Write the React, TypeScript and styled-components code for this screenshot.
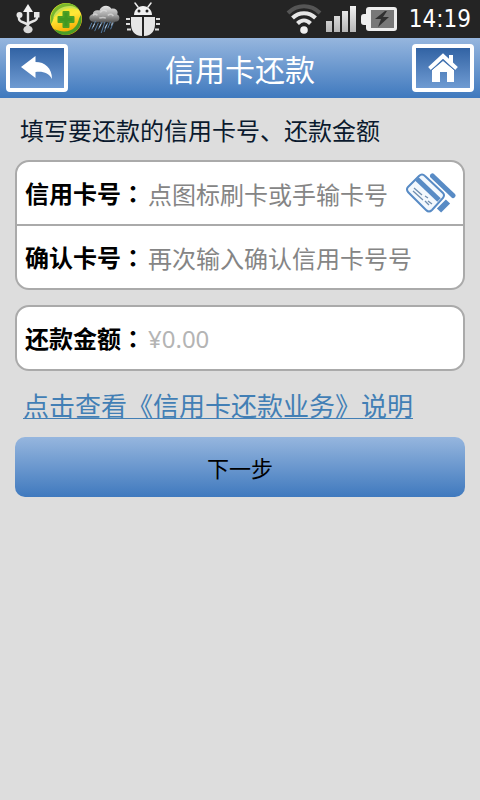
import React from "react";
import styled, { createGlobalStyle } from "styled-components";

const blueGradient = "linear-gradient(#96b6de, #3f79be)";

const GlobalStyle = createGlobalStyle`
  *, *::before, *::after { box-sizing: border-box; }
  html { background: #dddddd; }
  body {
    margin: 0;
    font-family: "Noto Sans CJK SC", sans-serif;
    color: #0b1a2e;
  }
  button, input { font-family: inherit; }
`;

const StatusBar = styled.div`
  display: flex;
  align-items: center;
  justify-content: space-between;
  height: 38px;
  padding: 0 9px 0 16px;
  background: #242424;
`;

const StatusGroup = styled.div<{ $gap: number }>`
  display: flex;
  align-items: center;
  gap: ${(p) => p.$gap}px;
  svg { display: block; }
`;

const Clock = styled.time`
  margin-left: 8px;
  font: 24px/38px "DejaVu Sans Condensed", "DejaVu Sans", sans-serif;
  color: #ffffff;
`;

const Header = styled.header`
  display: flex;
  align-items: center;
  justify-content: space-between;
  height: 60px;
  padding: 0 6px;
  background: ${blueGradient};
`;

const Title = styled.h1`
  margin: 0;
  font-size: 30px;
  line-height: 60px;
  font-weight: 400;
  color: #ffffff;
`;

const HeaderButton = styled.button`
  display: flex;
  align-items: center;
  justify-content: center;
  width: 62px;
  height: 48px;
  padding: 0;
  border: 4px solid #ffffff;
  border-radius: 4px;
  background: linear-gradient(#3263a4, #6f9bd2) padding-box;
  color: #ffffff;
`;

const Form = styled.form`
  display: flex;
  flex-direction: column;
  padding: 16px 15px;
`;

const Intro = styled.p`
  margin: 0 0 14px;
  padding-left: 5px;
  font-size: 24px;
  line-height: 32px;
`;

const Card = styled.div`
  margin-bottom: 15px;
  border: 2px solid #aaaaaa;
  border-radius: 14px;
  background: #ffffff;
`;

const Row = styled.div`
  display: flex;
  align-items: center;
  height: 62px;
  padding: 0 7px 0 8px;
  & + & {
    height: 64px;
    border-top: 2px solid #aaaaaa;
  }
`;

const FieldLabel = styled.label`
  flex: none;
  font-size: 24px;
  line-height: 32px;
  font-weight: 700;
  color: #000000;
`;

const Colon = styled.span`
  font-family: "Noto Sans CJK TC", sans-serif;
`;

const Field = styled.input<{ $hint: string }>`
  flex: 1;
  min-width: 0;
  height: 40px;
  padding: 0 0 0 3px;
  border: 0;
  outline: 0;
  background: transparent;
  font-size: 24px;
  color: #000000;
  &::placeholder {
    color: ${(p) => p.$hint};
    opacity: 1;
  }
`;

const AmountField = styled(Field)`
  font-family: "Noto Sans", "Noto Sans CJK SC", sans-serif;
`;

const SwipeButton = styled.button`
  flex: none;
  padding: 0;
  border: 0;
  background: transparent;
  svg { display: block; }
`;

const HelpLink = styled.a`
  align-self: flex-start;
  margin: 0 0 13px 8px;
  font-size: 26px;
  line-height: 38px;
  color: #427fb5;
  text-decoration: underline;
  text-decoration-thickness: 1px;
  text-underline-offset: 2px;
`;

const NextButton = styled.button`
  height: 60px;
  border: 0;
  border-radius: 10px;
  background: ${blueGradient};
  font-size: 22px;
  color: #000000;
`;

const UsbIcon = () => (
  <svg width="28" height="30" viewBox="0 0 28 30" fill="none" stroke="#e6e6e6" strokeWidth="2.4">
    <path d="M12 6v18M3 11v4c0 4 9 3 9 7M21 11v3c0 4-9 3-9 7" />
    <path d="M12 0l5 8H7z" fill="#f2f2f2" stroke="none" />
    <circle cx="3.5" cy="11" r="3" fill="#e6e6e6" stroke="none" />
    <path d="M18 8h5.5v5.500H18z" fill="#e6e6e6" stroke="none" />
    <ellipse cx="12" cy="25.500" rx="4.600" ry="3.800" fill="#d8d8d8" stroke="none" />
  </svg>
);

const ShieldIcon = () => (
  <svg width="32" height="32" viewBox="0 0 32 32">
    <defs>
      <linearGradient id="ball" x1="0" y1="0" x2="0.3" y2="1">
        <stop offset="0" stopColor="#d6e21c" />
        <stop offset="0.5" stopColor="#ffe838" />
        <stop offset="1" stopColor="#f8a800" />
      </linearGradient>
    </defs>
    <circle cx="16" cy="16" r="16" fill="url(#ball)" />
    <path d="M1 21C-2 9 8-1 19 .5c5 .6 8 3 10 6C21 2 11 4 7 9c-4 4-3 8-6 12z" fill="#79b82d" />
    <path d="M3 15C5 7 12 3 20 3c4 0 7 2 9 4C21 4 15 5 11 8c-3 2-5 5-8 7z" fill="#c8df53" />
    <path d="M31 12c3 11-6 20-16 20-5 0-9-3-11-6 8 4 17 3 21-2 4-4 3-8 6-12z" fill="#4b9d27" />
    <path d="M13.500 9h5v5h5v5h-5v5h-5v-5h-5v-5h5z" fill="#419820" stroke="#4c9f24" strokeWidth="2" strokeLinejoin="round" />
  </svg>
);

const RainIcon = () => (
  <svg width="32" height="28" viewBox="0 0 34 30">
    <defs>
      <linearGradient id="cloud" x1="0" y1="0" x2="0" y2="1">
        <stop offset="0" stopColor="#e6e6e6" />
        <stop offset="0.55" stopColor="#a0a0a0" />
        <stop offset="1" stopColor="#444444" />
      </linearGradient>
    </defs>
    <path d="M5 18c-5-1-5-7 0-8 0-4 4-5 7-4 2-6 10-7 13-2 5-1 8 3 6 6 4 2 3 8-2 8-3 3-7 1-9 0-4 3-6 2-8 0-2 1-5 1-7 0z" fill="url(#cloud)" />
    <path d="M5 11c2-2 4-1 5 0M13 8c2-3 5-3 7-1M21 11c3-2 5-1 6 1M12 14c3-1 5-1 7 0" fill="none" stroke="#dedede" strokeWidth="1.600" opacity=".7" />
    <path d="M4 19l-3 7M8 17l-4 9M11 19l-4 9M15 18l-4 8M18 18l-4 12M21 19l-4 10M24 18l-3 7M27 19l-3 7" stroke="#5580ab" strokeWidth="1" />
    <path d="M7 20l-2 4M14 20l-2 4M20 21l-2 4M26 19l-1 3" stroke="#c2d3e3" strokeWidth="1" />
  </svg>
);

const DebugIcon = () => (
  <svg width="34" height="34" viewBox="0 0 34 34">
    <path d="M12 5L9 1M22 5l3-4" stroke="#eeeeee" strokeWidth="1.500" strokeLinecap="round" />
    <path d="M8 13c0-5 4-9 9-9s9 4 9 9z" fill="#f2f2f2" />
    <circle cx="13" cy="9" r="1.500" fill="#242424" />
    <circle cx="21" cy="9" r="1.500" fill="#242424" />
    <path d="M5 15h11v19C8 34 5 28 5 22zM18 15h11v7c0 6-3 12-11 12z" fill="#e6e6e6" />
    <path d="M0 17h4M0 22h4M1 27.500h4M30 17h4M30 22h4M29 27.500h4" stroke="#dddddd" strokeWidth="2.200" />
  </svg>
);

const WifiIcon = () => (
  <svg width="36" height="30" viewBox="0 0 36 30" fill="none" strokeWidth="4">
    <path d="M2 9c9-9 23-9 32 0" stroke="#555555" />
    <path d="M6.500 14c6.500-6.500 16.500-6.500 23 0" stroke="#e6e6e6" />
    <path d="M11.500 19.500c4-4 9-4 13 0" stroke="#e6e6e6" />
    <circle cx="18" cy="26" r="3.800" fill="#efefef" />
  </svg>
);

const SignalIcon = () => (
  <svg width="31" height="26" viewBox="0 0 31 26">
    <defs>
      <linearGradient id="bars" x1="0" y1="0" x2="0" y2="1">
        <stop offset="0" stopColor="#f2f2f2" />
        <stop offset="1" stopColor="#b6b6b6" />
      </linearGradient>
    </defs>
    <path d="M0 15h6v11H0zM8 10h6v16H8zM16 5h6v21h-6zM24 0h6v26h-6z" fill="url(#bars)" />
  </svg>
);

const BatteryIcon = () => (
  <svg width="36" height="26" viewBox="0 0 36 26">
    <path d="M8 1h25q3 0 3 3v18q0 3-3 3H8q-3 0-3-3v-3H3q-3 0-3-3v-5q0-3 3-3h2V4q0-3 3-3z" fill="#eeeeee" />
    <path d="M10 4h23v18H10z" fill="#787878" />
    <path d="M24 5l-10 8h6l-3 8 11-10h-6l4-6z" fill="#303030" />
  </svg>
);

const BackIcon = () => (
  <svg width="32" height="24" viewBox="0 0 32 24" fill="currentColor">
    <path d="M0 11L14.500 0v6C24 6 31 12 31 23c-3-6-9-8-16.500-7v6z" />
  </svg>
);

const HomeIcon = () => (
  <svg width="30" height="30" viewBox="0 0 30 30" fill="currentColor">
    <path d="M4 17L15 8l11 9v12h-7V19h-7v10H4z" />
    <path d="M1.500 15.500L15 3l13.500 12.500" fill="none" stroke="currentColor" strokeWidth="4" />
    <path d="M21 2h4v9l-4-4z" />
    <path d="M3 17.500L15 7l12 10.500" fill="none" stroke="#4675b1" strokeWidth="1" />
  </svg>
);

const CardsIcon = () => (
  <svg width="50" height="40" viewBox="0 0 50 40" fill="none" stroke="#588bc5">
    <path d="M26.500 3l20.500 19.500" strokeWidth="5" strokeLinecap="round" />
    <path d="M42 28.500l-9 9" strokeWidth="6" />
    <path d="M2 14L13 3q3-3 6 0l18 17q2 2 0 5L26 37q-3 3-6 0L2 19q-2-3 0-5z" fill="#f3f8fd" strokeWidth="2" />
    <path d="M11 6l22 21" strokeWidth="5" />
    <path d="M8 15l8 7M7 18l10 9M19 23l3 2M19 28l4 4M22 28l4 3" stroke="#708eaf" strokeWidth="1.300" />
  </svg>
);

export default function App() {
  return (
    <>
      <GlobalStyle />
      <StatusBar>
        <StatusGroup $gap={6}>
          <UsbIcon />
          <ShieldIcon />
          <RainIcon />
          <DebugIcon />
        </StatusGroup>
        <StatusGroup $gap={4}>
          <WifiIcon />
          <SignalIcon />
          <BatteryIcon />
          <Clock>14:19</Clock>
        </StatusGroup>
      </StatusBar>
      <Header>
        <HeaderButton type="button" aria-label="返回">
          <BackIcon />
        </HeaderButton>
        <Title>信用卡还款</Title>
        <HeaderButton type="button" aria-label="首页">
          <HomeIcon />
        </HeaderButton>
      </Header>
      <Form onSubmit={(e) => e.preventDefault()}>
        <Intro>填写要还款的信用卡号、还款金额</Intro>
        <Card>
          <Row>
            <FieldLabel htmlFor="card">信用卡号<Colon>：</Colon></FieldLabel>
            <Field id="card" inputMode="numeric" placeholder="点图标刷卡或手输卡号" $hint="#858585" />
            <SwipeButton type="button" aria-label="刷卡">
              <CardsIcon />
            </SwipeButton>
          </Row>
          <Row>
            <FieldLabel htmlFor="confirm">确认卡号<Colon>：</Colon></FieldLabel>
            <Field id="confirm" inputMode="numeric" placeholder="再次输入确认信用卡号号" $hint="#858585" />
          </Row>
        </Card>
        <Card>
          <Row>
            <FieldLabel htmlFor="amount">还款金额<Colon>：</Colon></FieldLabel>
            <AmountField id="amount" inputMode="decimal" placeholder="¥0.00" $hint="#b4b4b4" />
          </Row>
        </Card>
        <HelpLink href="#help">点击查看《信用卡还款业务》说明</HelpLink>
        <NextButton type="submit">下一步</NextButton>
      </Form>
    </>
  );
}
